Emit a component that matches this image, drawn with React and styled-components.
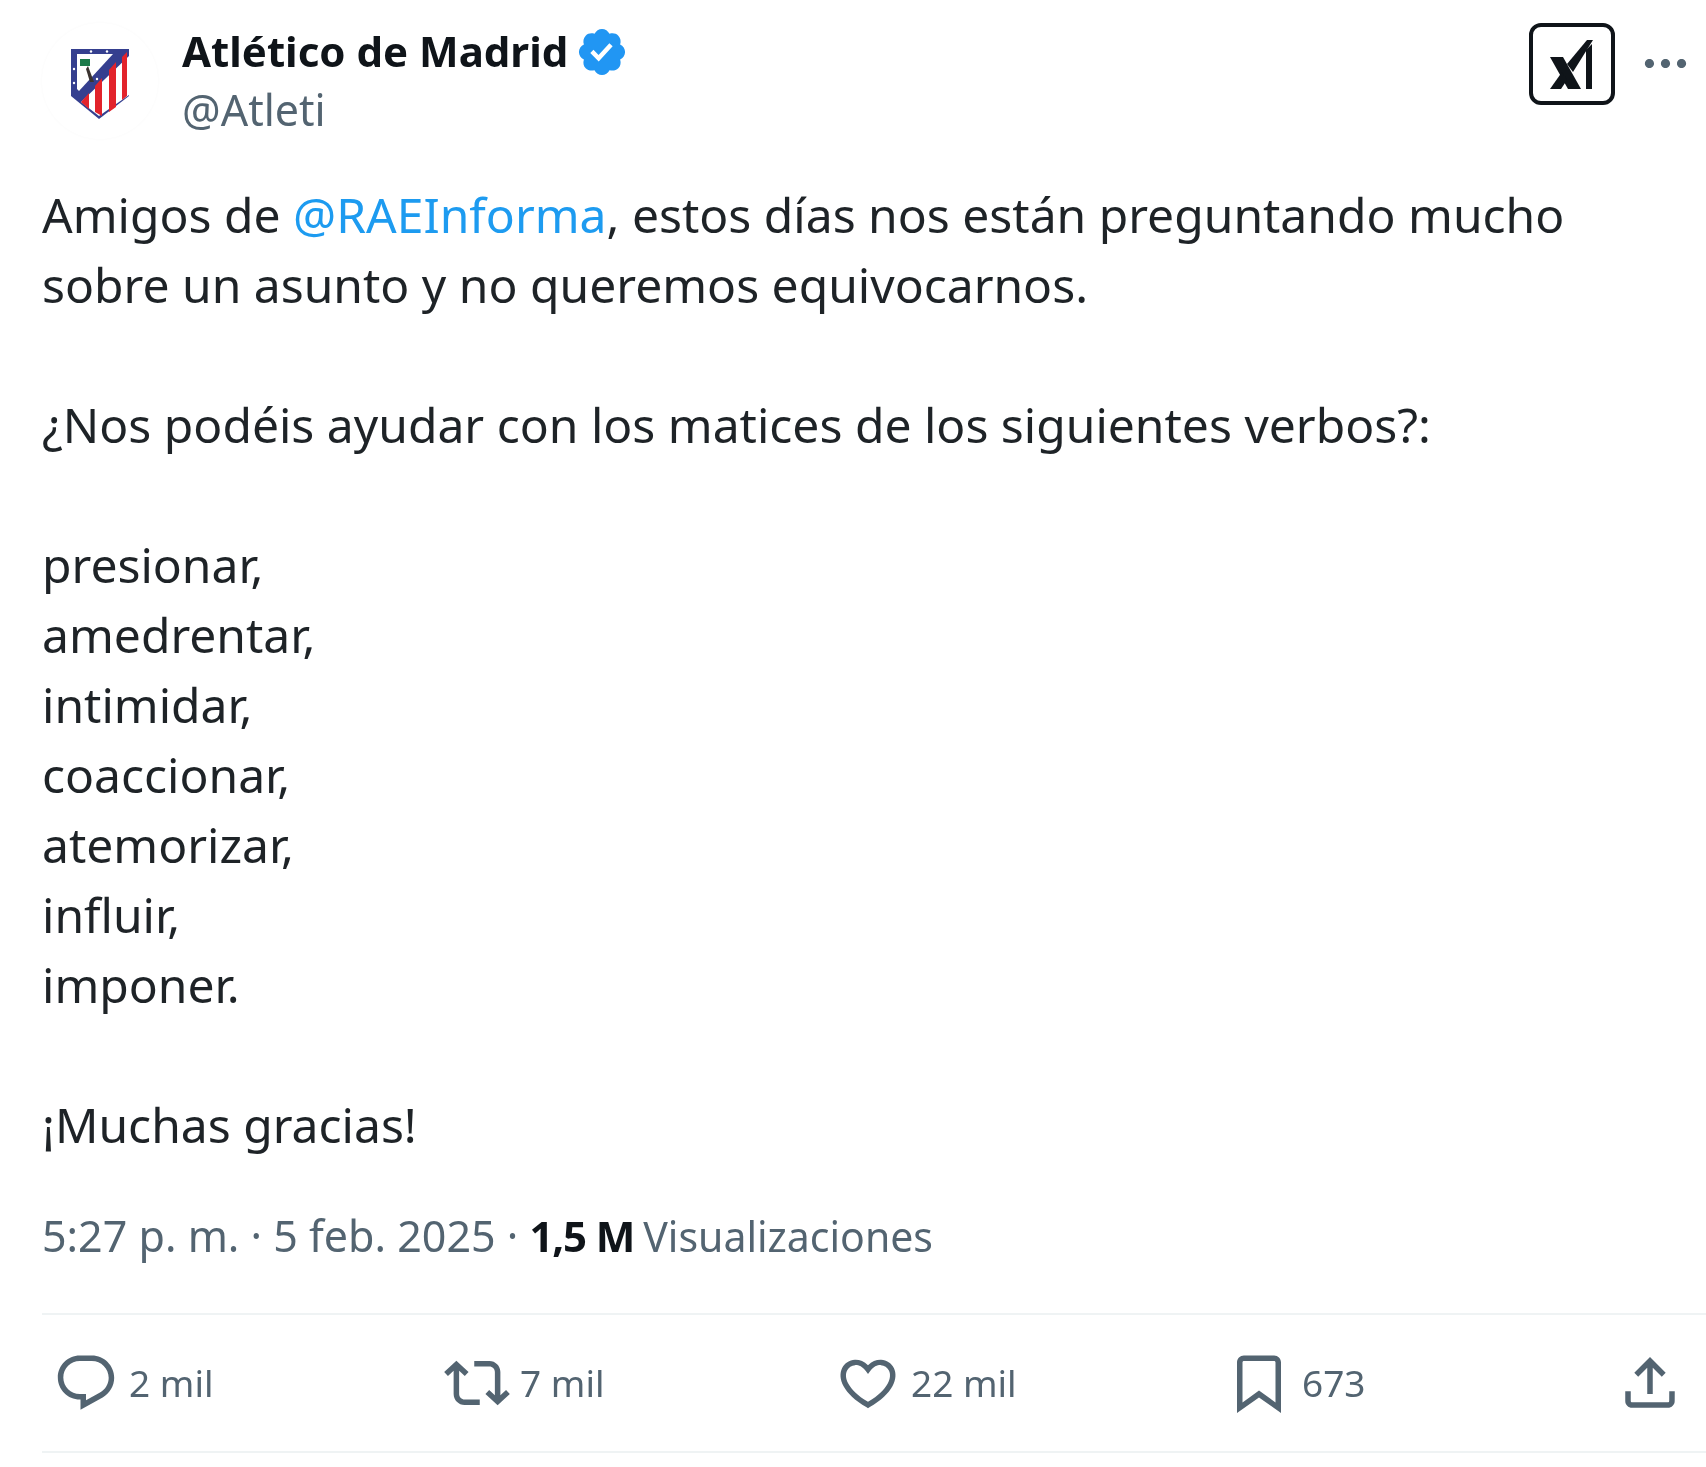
import React from 'react';
import styled, { createGlobalStyle } from 'styled-components';

const GlobalStyle = createGlobalStyle`
  html, body {
    margin: 0;
    padding: 0;
    background: #fff;
  }
`;

const Page = styled.div`
  width: 1706px;
  height: 1467px;
  overflow: hidden;
  background: #fff;
  font-family: 'Noto Sans', 'Open Sans', sans-serif;
  color: #0f1419;
  box-sizing: border-box;
  padding-left: 42px;
  filter: blur(0.5px);
`;

const Header = styled.header`
  display: flex;
  align-items: flex-start;
  height: 180px;
  padding-top: 23px;
  box-sizing: border-box;
`;

const Avatar = styled.div`
  width: 116px;
  height: 116px;
  flex: none;
  border-radius: 50%;
  display: flex;
  align-items: center;
  justify-content: center;
  padding-top: 6px;
  box-sizing: border-box;
  box-shadow: 0 0 3px rgba(0, 0, 0, 0.03);
`;

const Names = styled.div`
  margin-left: 24px;
  display: flex;
  flex-direction: column;
`;

const NameRow = styled.div`
  display: flex;
  align-items: center;
  height: 58px;
`;

const Name = styled.span`
  font-size: 42px;
  font-weight: 700;
  line-height: 58px;
  margin-top: -2px;
`;

const Badge = styled.svg`
  width: 54px;
  height: 54px;
  margin-left: 7px;
  fill: #2196f3;
`;

const Handle = styled.span`
  font-size: 43px;
  line-height: 58px;
  color: #536471;
`;

const Actions = styled.div`
  margin-left: auto;
  display: flex;
  align-items: center;
  gap: 23px;
  height: 82px;
`;

const GrokBox = styled.div`
  width: 86px;
  height: 82px;
  box-sizing: border-box;
  border: 4px solid #0f1419;
  border-radius: 12px;
  display: flex;
  align-items: center;
  justify-content: center;
`;

const MoreIcon = styled.svg`
  width: 55px;
  height: 55px;
  margin-right: 13px;
  fill: #536471;
  transform: translateY(-1px);
`;

const Body = styled.div`
  font-size: 48px;
  line-height: 70px;
  white-space: pre-line;
  height: 980px;
  color: #1e2327;
`;

const Mention = styled.span`
  color: #1d9bf0;
`;

const Meta = styled.div`
  height: 153px;
  box-sizing: border-box;
  padding-top: 47px;
  font-size: 43px;
  line-height: 58px;
  color: #536471;
`;

const Strong = styled.strong`
  font-size: 42px;
  font-weight: 700;
  letter-spacing: -1.2px;
  color: #0f1419;
`;

const Views = styled.span`
  font-size: 41px;
  margin-left: -2px;
`;

const Stats = styled.div`
  display: grid;
  grid-template-columns: repeat(5, 391px);
  align-items: center;
  height: 140px;
  box-sizing: border-box;
  padding-left: 11px;
  border-top: 2px solid #eff3f4;
  border-bottom: 2px solid #eff3f4;
`;

const Stat = styled.div`
  display: flex;
  align-items: center;
  gap: 10px;
  font-size: 37px;
  line-height: 66px;
  color: #536471;
`;

const StatIcon = styled.svg`
  width: 66px;
  height: 66px;
  fill: #536471;
  flex: none;
`;

const icons = {
  reply:
    'M1.751 10c0-4.42 3.584-8 8.005-8h4.366c4.49 0 8.129 3.64 8.129 8.13 0 2.96-1.607 5.68-4.196 7.11l-8.054 4.46v-3.69h-.067c-4.49.1-8.183-3.51-8.183-8.01zm8.005-6c-3.317 0-6.005 2.69-6.005 6 0 3.37 2.77 6.08 6.138 6.01l.351-.01h1.761v2.3l5.087-2.81c1.951-1.08 3.163-3.13 3.163-5.36 0-3.39-2.744-6.13-6.129-6.13H9.756z',
  repost:
    'M4.5 3.88l4.432 4.14-1.364 1.46L5.5 7.55V16c0 1.1.896 2 2 2H13v2H7.5c-2.209 0-4-1.79-4-4V7.55L1.432 9.48.068 8.02 4.5 3.88zM16.5 6H11V4h5.5c2.209 0 4 1.79 4 4v8.45l2.068-1.93 1.364 1.46-4.432 4.14-4.432-4.14 1.364-1.46 2.068 1.93V8c0-1.1-.896-2-2-2z',
  like:
    'M16.697 5.5c-1.222-.06-2.679.51-3.89 2.16l-.805 1.09-.806-1.09C9.984 6.01 8.526 5.44 7.304 5.5c-1.243.07-2.349.78-2.91 1.91-.552 1.12-.633 2.78.479 4.82 1.074 1.97 3.257 4.27 7.129 6.61 3.87-2.34 6.052-4.64 7.126-6.61 1.111-2.04 1.03-3.7.477-4.82-.561-1.13-1.666-1.84-2.908-1.91zm4.187 7.69c-1.351 2.48-4.001 5.12-8.379 7.67l-.503.3-.504-.3c-4.379-2.55-7.029-5.19-8.382-7.67-1.36-2.5-1.41-4.86-.514-6.67.887-1.79 2.647-2.91 4.601-3.01 1.651-.09 3.368.56 4.798 2.01 1.429-1.45 3.146-2.1 4.796-2.01 1.954.1 3.714 1.22 4.601 3.01.896 1.81.846 4.17-.514 6.67z',
  bookmark:
    'M4 4.5C4 3.12 5.119 2 6.5 2h11C18.881 2 20 3.12 20 4.5v18.44l-8-5.71-8 5.71V4.5zM6.5 4c-.276 0-.5.22-.5.5v14.56l6-4.29 6 4.29V4.5c0-.28-.224-.5-.5-.5h-11z',
  share:
    'M12 2.59l5.7 5.7-1.41 1.42L13 6.41V16h-2V6.41l-3.3 3.3-1.41-1.42L12 2.59zM21 15l-.02 3.51c0 1.38-1.12 2.49-2.5 2.49H5.5C4.11 21 3 19.88 3 18.5V15h2v3.5c0 .28.22.5.5.5h12.98c.28 0 .5-.22.5-.5L19 15h2z',
};

const stats = [
  { icon: 'reply', value: '2 mil' },
  { icon: 'repost', value: '7 mil' },
  { icon: 'like', value: '22 mil' },
  { icon: 'bookmark', value: '673' },
  { icon: 'share', value: '' },
];

function Shield() {
  return (
    <svg width="58" height="70" viewBox="0 0 58 70">
      <path d="M0 0H58V47L28 70L0 47Z" fill="#353f8f" />
      <path d="M6 5H42L8 42L6 40Z" fill="#fff" />
      <path d="M58 7V46L28 67L10 53Z" fill="#fff" />
      <path d="M10 53L18 44V60ZM24 37L31 29V67L24 63ZM38 21L45 13V58L38 63ZM51 8L56 3V47L51 51Z" fill="#e2232b" />
      <path d="M9 10h10v7H9z" fill="#1c7a4a" />
      <path d="M17 17l6 16h-4l-4-13z" fill="#3a3330" />
      <circle cx="20" cy="2.5" r="1.2" fill="#fff" />
      <circle cx="36" cy="2.5" r="1.2" fill="#fff" />
      <circle cx="3" cy="20" r="1.2" fill="#fff" />
      <circle cx="3" cy="34" r="1.2" fill="#fff" />
      <circle cx="26" cy="30" r="1.2" fill="#fff" />
    </svg>
  );
}

function GrokMark() {
  return (
    <svg width="44" height="50" viewBox="0 0 44 50" fill="#0f1419">
      <path d="M0 18H13L31 50H18Z" />
      <path d="M0 50L12 33L17 41L11 50Z" />
      <path d="M17 25L37 1H43L23 33Z" />
      <path d="M36 11L42 5V50H36Z" />
    </svg>
  );
}

export default function App() {
  return (
    <Page>
      <GlobalStyle />
      <Header>
        <Avatar>
          <Shield />
        </Avatar>
        <Names>
          <NameRow>
            <Name>Atlético de Madrid</Name>
            <Badge viewBox="0 0 24 24">
              <path d="M22.25 12c0-1.43-.88-2.67-2.19-3.34.46-1.39.2-2.9-.81-3.91s-2.52-1.27-3.91-.81c-.66-1.31-1.91-2.19-3.34-2.19s-2.67.88-3.33 2.19c-1.4-.46-2.91-.2-3.92.81s-1.26 2.52-.8 3.91c-1.31.67-2.2 1.91-2.2 3.34s.89 2.67 2.2 3.34c-.46 1.39-.21 2.9.8 3.91s2.52 1.26 3.91.81c.67 1.31 1.91 2.19 3.34 2.19s2.68-.88 3.34-2.19c1.39.45 2.9.2 3.91-.81s1.27-2.52.81-3.91c1.31-.67 2.19-1.91 2.19-3.34zm-11.71 4.2L6.8 12.46l1.41-1.42 2.26 2.26 4.8-5.23 1.47 1.36-6.2 6.77z" />
            </Badge>
          </NameRow>
          <Handle>@Atleti</Handle>
        </Names>
        <Actions>
          <GrokBox>
            <GrokMark />
          </GrokBox>
          <MoreIcon viewBox="0 0 24 24">
            <path d="M3 12c0-1.1.9-2 2-2s2 .9 2 2-.9 2-2 2-2-.9-2-2zm9 2c1.1 0 2-.9 2-2s-.9-2-2-2-2 .9-2 2 .9 2 2 2zm7 0c1.1 0 2-.9 2-2s-.9-2-2-2-2 .9-2 2 .9 2 2 2z" />
          </MoreIcon>
        </Actions>
      </Header>
      <Body>
        Amigos de <Mention>@RAEInforma</Mention>
        {`, estos días nos están preguntando mucho
sobre un asunto y no queremos equivocarnos.

¿Nos podéis ayudar con los matices de los siguientes verbos?:

presionar,
amedrentar,
intimidar,
coaccionar,
atemorizar,
influir,
imponer.

¡Muchas gracias!`}
      </Body>
      <Meta>
        5:27 p. m. · 5 feb. 2025 · <Strong>1,5 M</Strong> <Views>Visualizaciones</Views>
      </Meta>
      <Stats>
        {stats.map((stat) => (
          <Stat key={stat.icon}>
            <StatIcon viewBox="0 0 24 24">
              <path d={icons[stat.icon]} />
            </StatIcon>
            {stat.value && <span>{stat.value}</span>}
          </Stat>
        ))}
      </Stats>
    </Page>
  );
}
